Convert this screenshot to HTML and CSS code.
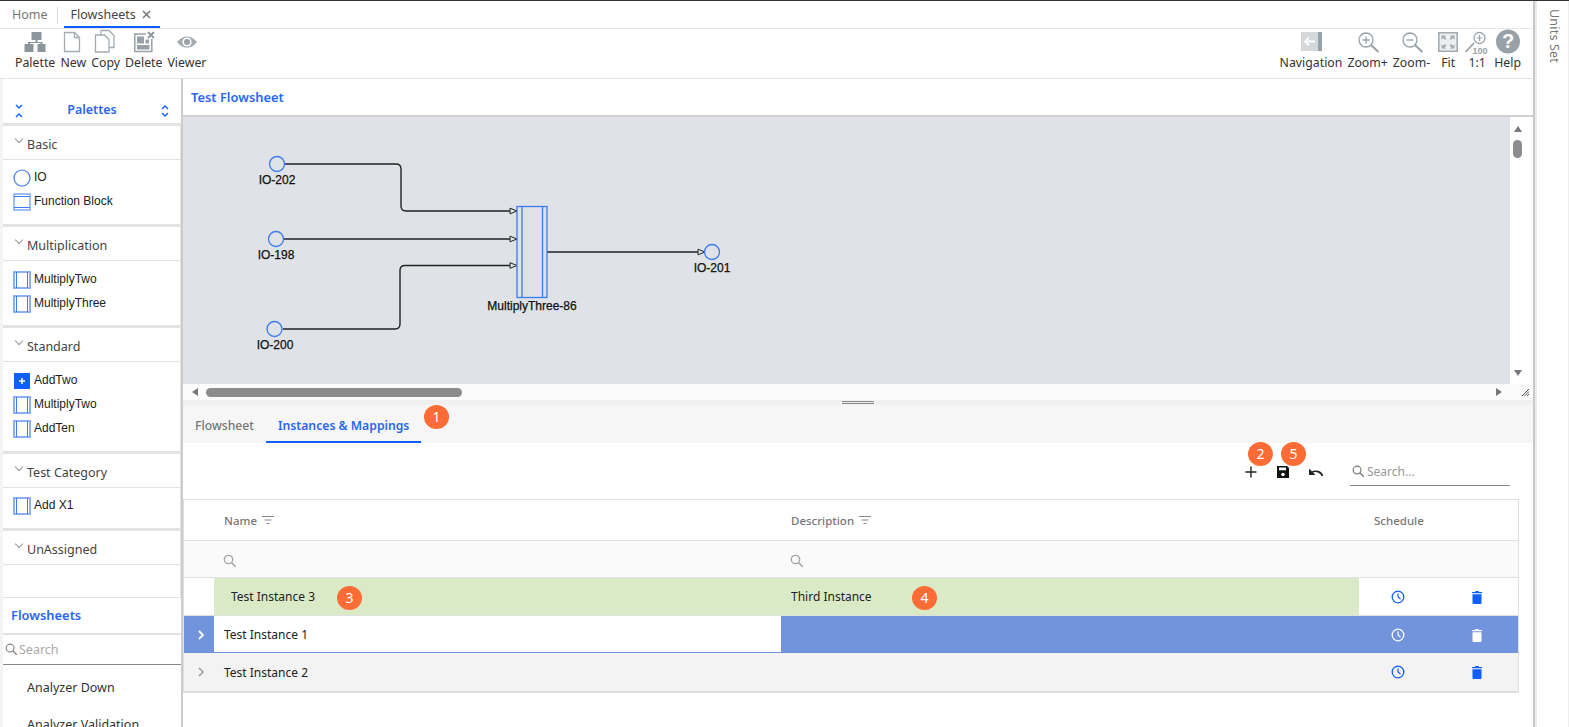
FILE: index.html
```html
<!DOCTYPE html>
<html lang="en">
<head>
  <meta charset="UTF-8" />
  <title>Flowsheets</title>
  <link rel="stylesheet" href="styles.css">
</head>
<body>
<div class="app">
  <div class="workspace">
    <nav class="tabs">
      <span class="tab">Home</span>
      <span class="tab-sep"></span>
      <span class="tab tab-active">Flowsheets <svg class="tab-x" viewBox="0 0 9 9"><path stroke="#777" stroke-width="1.500" d="M1 1l7 7M8 1L1 8"/></svg></span>
    </nav>

    <div class="toolbar">
      <div class="tool-group">
        <div class="tool">
          <svg class="tool-icon" viewBox="0 0 26 26"><path fill="#8b959c" d="M9.500 3h10v8h-4v2h5v2h3v8h-8v-8h3v-1H8v1h3.500v8h-9v-8H6v-2h7.500v-2h-4z"/></svg>
          <span>Palette</span>
        </div>
        <div class="tool">
          <svg class="tool-icon" viewBox="0 0 26 26"><path fill="none" stroke="#a4acb1" stroke-width="1.300" d="M4.500 3.500h10l5 5v14h-15zM14.500 3.500v5h5"/></svg>
          <span>New</span>
        </div>
        <div class="tool">
          <svg class="tool-icon" viewBox="0 0 26 26"><path fill="#fff" stroke="#a4acb1" stroke-width="1.300" d="M8 1.500h8l5 5v12H8z"/><path fill="#fff" stroke="#a4acb1" stroke-width="1.300" d="M2.500 6h9l4.500 4.500V23H2.500z"/></svg>
          <span>Copy</span>
        </div>
        <div class="tool">
          <svg class="tool-icon" viewBox="0 0 26 26"><path fill="none" stroke="#98a1a7" stroke-width="1.500" d="M3.800 5h17v17.500h-17z"/><path fill="#98a1a7" d="M6 7.500h7v7H6zM14.500 10.500H18v4h-3.500zM6 16h12.500v4.500H6z"/><path fill="#fff" d="M15 2h9v8h-9z"/><path stroke="#8b959c" stroke-width="1.800" d="M17 3l6 6M23 3l-6 6"/></svg>
          <span>Delete</span>
        </div>
        <div class="tool">
          <svg class="tool-icon" viewBox="0 0 26 26"><path fill="#a4acb1" d="M3 13c5.500-7.500 14.500-7.500 20 0-5.500 7.500-14.500 7.500-20 0z"/><circle cx="13" cy="13" r="4.600" fill="#fff"/><circle cx="13" cy="13" r="3" fill="#98a1a7"/></svg>
          <span>Viewer</span>
        </div>
      </div>
      <div class="tool-group">
        <div class="tool">
          <svg class="tool-icon" viewBox="0 0 26 26"><path fill="#d4d8da" d="M3 3h17v19H3z"/><path fill="#98a1a7" d="M20 3h4v19h-4z"/><path stroke="#fff" stroke-width="1.800" fill="none" d="M17 12.500H7M11 8.500l-4 4 4 4"/></svg>
          <span>Navigation</span>
        </div>
        <div class="tool">
          <svg class="tool-icon" viewBox="0 0 26 26"><circle cx="11" cy="11" r="7" fill="none" stroke="#98a1a7" stroke-width="1.300"/><path stroke="#98a1a7" stroke-width="1.300" d="M7.500 11h7M11 7.500v7"/><path stroke="#98a1a7" stroke-width="2" d="M16 16l7.500 7"/></svg>
          <span>Zoom+</span>
        </div>
        <div class="tool">
          <svg class="tool-icon" viewBox="0 0 26 26"><circle cx="11" cy="11" r="7" fill="none" stroke="#98a1a7" stroke-width="1.300"/><path stroke="#98a1a7" stroke-width="1.300" d="M7.500 11h7"/><path stroke="#98a1a7" stroke-width="2" d="M16 16l7.500 7"/></svg>
          <span>Zoom-</span>
        </div>
        <div class="tool">
          <svg class="tool-icon" viewBox="0 0 26 26"><path fill="#eceeef" stroke="#a4acb1" stroke-width="1.600" d="M3.800 3.800h18.400v18.400H3.800z"/><path fill="#a4acb1" d="M6.500 6.500h4.500L9.700 7.800l1.800 1.800-1.400 1.400-1.800-1.800-1.800 1.300zM19.500 6.500H15l1.300 1.300-1.800 1.800 1.400 1.400 1.800-1.800 1.800 1.300zM6.500 19.500h4.500l-1.300-1.300 1.800-1.800-1.400-1.400-1.800 1.800-1.800-1.300zM19.500 19.500H15l1.300-1.300-1.800-1.800 1.400-1.400 1.800 1.800 1.800-1.300z"/></svg>
          <span>Fit</span>
        </div>
        <div class="tool tool-one">
          <svg class="tool-icon" viewBox="0 0 26 26"><circle cx="15.500" cy="9" r="5.500" fill="none" stroke="#98a1a7" stroke-width="1.300"/><path stroke="#98a1a7" stroke-width="1.200" d="M12.500 9h6M15.500 6v6"/><path stroke="#98a1a7" stroke-width="1.800" d="M10 14l-8.500 9"/><text x="8.500" y="25" class="tool-100">100</text></svg>
          <span>1:1</span>
        </div>
        <div class="tool tool-help">
          <svg class="tool-icon" viewBox="0 0 26 26"><circle cx="13" cy="12.500" r="12" fill="#98a1a7"/><text x="13" y="19" class="help-q">?</text></svg>
          <span>Help</span>
        </div>
      </div>
    </div>

    <div class="main">
      <aside class="sidebar">
        <div class="pal-top">
          <svg class="chev" viewBox="0 0 10 14"><path fill="none" stroke="#1a66ff" stroke-width="1.500" d="M2 1l3 3 3-3M2 13l3-3 3 3"/></svg>
          <span class="pal-title">Palettes</span>
          <svg class="chev" viewBox="0 0 10 14"><path fill="none" stroke="#1a66ff" stroke-width="1.500" d="M2 5l3-3 3 3M2 9l3 3 3-3"/></svg>
        </div>

        <section class="pal pal-basic">
          <h4 class="pal-head"><i class="caret"></i>Basic</h4>
          <div class="pal-body">
            <div class="pal-item"><svg class="shape" viewBox="0 0 18 18"><circle cx="9" cy="9" r="8" fill="#fff" stroke="#3d7bf0" stroke-width="1.200"/></svg>IO</div>
            <div class="pal-item"><svg class="shape" viewBox="0 0 18 18"><use href="#fb"/></svg>Function Block</div>
          </div>
        </section>

        <section class="pal pal-multi">
          <h4 class="pal-head"><i class="caret"></i>Multiplication</h4>
          <div class="pal-body">
            <div class="pal-item"><svg class="shape" viewBox="0 0 18 18"><use href="#mb"/></svg>MultiplyTwo</div>
            <div class="pal-item"><svg class="shape" viewBox="0 0 18 18"><use href="#mb"/></svg>MultiplyThree</div>
          </div>
        </section>

        <section class="pal pal-std">
          <h4 class="pal-head"><i class="caret"></i>Standard</h4>
          <div class="pal-body">
            <div class="pal-item"><svg class="shape" viewBox="0 0 18 18"><rect x="1" y="1" width="16" height="16" fill="#0f5fff"/><path stroke="#fff" stroke-width="1.500" d="M6 9h6M9 6v6"/></svg>AddTwo</div>
            <div class="pal-item"><svg class="shape" viewBox="0 0 18 18"><use href="#mb"/></svg>MultiplyTwo</div>
            <div class="pal-item"><svg class="shape" viewBox="0 0 18 18"><use href="#mb"/></svg>AddTen</div>
          </div>
        </section>

        <section class="pal pal-test">
          <h4 class="pal-head"><i class="caret"></i>Test Category</h4>
          <div class="pal-body">
            <div class="pal-item"><svg class="shape" viewBox="0 0 18 18"><use href="#mb"/></svg>Add X1</div>
          </div>
        </section>

        <section class="pal pal-un">
          <h4 class="pal-head"><i class="caret"></i>UnAssigned</h4>
          <div class="pal-body"></div>
        </section>

        <div class="fs-title">Flowsheets</div>
        <div class="fs-search">
          <svg class="mag" viewBox="0 0 14 14"><circle cx="5.500" cy="5.500" r="4.200" fill="none" stroke="#8a8a8a" stroke-width="1.300"/><path stroke="#8a8a8a" stroke-width="1.600" d="M8.700 8.700l4 4"/></svg>
          <span>Search</span>
        </div>
        <ul class="fs-list">
          <li>Analyzer Down</li>
          <li>Analyzer Validation</li>
        </ul>
      </aside>

      <div class="content">
        <div class="sheet-title">Test Flowsheet</div>

        <div class="canvas-wrap">
          <div class="canvas-row">
            <svg class="canvas" viewBox="-1 0 1327 267">
              <defs>
                <g id="arrow"><path d="M0-2.800L7 0 0 2.800z" fill="#dfe2e6" stroke="#222" stroke-width="1"/></g>
              </defs>
              <g fill="none" stroke="#222" stroke-width="1.400">
                <path d="M101 47H212q5 0 5 5v37q0 5 5 5H327"/>
                <path d="M100 122H327"/>
                <path d="M99 212H211q5 0 5-5v-53.500q0-5 5-5H327"/>
                <path d="M363 135H514"/>
              </g>
              <use href="#arrow" x="326" y="94"/>
              <use href="#arrow" x="326" y="122"/>
              <use href="#arrow" x="326" y="148.500"/>
              <use href="#arrow" x="514" y="135"/>
              <g fill="#dfe2e6" stroke="#3d7bf0" stroke-width="1.300">
                <circle cx="93" cy="47" r="7.500"/>
                <circle cx="92" cy="122" r="7.500"/>
                <circle cx="90.500" cy="212" r="7.500"/>
                <circle cx="528" cy="135" r="7.500"/>
                <rect x="333" y="89.500" width="30" height="91"/>
                <path d="M338 89.500v91M358.500 89.500v91"/>
              </g>
              <g class="node-label">
                <text x="93" y="67">IO-202</text>
                <text x="92" y="142">IO-198</text>
                <text x="91" y="232">IO-200</text>
                <text x="528" y="155">IO-201</text>
                <text x="348" y="193">MultiplyThree-86</text>
              </g>
            </svg>
            <div class="vscroll">
              <i class="arr arr-up"></i>
              <i class="vthumb"></i>
              <i class="arr arr-down"></i>
            </div>
          </div>
          <div class="hscroll">
            <i class="arr arr-left"></i>
            <div class="htrack"><i class="hthumb"></i></div>
            <i class="arr arr-right"></i>
            <svg class="grip" viewBox="0 0 10 10"><path stroke="#555" d="M9 2L2 9M9 4.500L4.500 9M9 7L7 9"/></svg>
          </div>
        </div>

        <div class="divider"><i></i></div>

        <div class="subtabs">
          <span class="subtab">Flowsheet</span>
          <span class="subtab subtab-active">Instances &amp; Mappings</span>
          <span class="badge badge-1">1</span>
        </div>

        <div class="actions">
          <span class="badge badge-2">2</span>
          <span class="badge badge-5">5</span>
          <svg class="act" viewBox="0 0 14 14"><path stroke="#222" stroke-width="1.400" d="M1.500 7h11M7 1.500v11"/></svg>
          <svg class="act" viewBox="0 0 14 14"><path fill="#111" d="M1 1h10l2 2v10H1z"/><path fill="#fff" d="M3 2.500h7v2.800H3z"/><circle cx="7" cy="9.500" r="1.800" fill="#fff"/></svg>
          <svg class="act act-undo" viewBox="0 0 16 14"><path fill="none" stroke="#222" stroke-width="1.700" d="M14.500 11C13 6.500 8 5 3.500 7.500"/><path fill="#222" d="M1 3.500V10h6.500z"/></svg>
          <div class="act-search">
            <svg class="mag" viewBox="0 0 14 14"><circle cx="5.500" cy="5.500" r="4.200" fill="none" stroke="#777" stroke-width="1.300"/><path stroke="#777" stroke-width="1.600" d="M8.700 8.700l4 4"/></svg>
            <span>Search...</span>
          </div>
        </div>

        <div class="table">
          <div class="tr tr-head">
            <div class="td"></div>
            <div class="td td-name">Name <svg class="filter" viewBox="0 0 14 10"><path stroke="#888" d="M1 1.500h12M3.500 5h7M5.500 8.500h3"/></svg></div>
            <div class="td td-desc">Description <svg class="filter" viewBox="0 0 14 10"><path stroke="#888" d="M1 1.500h12M3.500 5h7M5.500 8.500h3"/></svg></div>
            <div class="td td-sched">Schedule</div>
            <div class="td"></div>
          </div>
          <div class="tr tr-filter">
            <div class="td"></div>
            <div class="td td-name"><svg class="mag" viewBox="0 0 14 14"><circle cx="5.500" cy="5.500" r="4.200" fill="none" stroke="#a3a3a3" stroke-width="1.300"/><path stroke="#a3a3a3" stroke-width="1.600" d="M8.700 8.700l4 4"/></svg></div>
            <div class="td td-desc"><svg class="mag" viewBox="0 0 14 14"><circle cx="5.500" cy="5.500" r="4.200" fill="none" stroke="#a3a3a3" stroke-width="1.300"/><path stroke="#a3a3a3" stroke-width="1.600" d="M8.700 8.700l4 4"/></svg></div>
            <div class="td"></div>
            <div class="td"></div>
          </div>
          <div class="tr tr-row tr-new">
            <div class="td"></div>
            <div class="td td-name td-green td-indent">Test Instance 3<span class="badge badge-3">3</span></div>
            <div class="td td-desc td-green">Third Instance<span class="badge badge-4">4</span></div>
            <div class="td td-icon"><svg class="ico" viewBox="0 0 14 14"><use href="#clock"/></svg></div>
            <div class="td td-icon"><svg class="ico" viewBox="0 0 14 14"><use href="#trash"/></svg></div>
          </div>
          <div class="tr tr-row tr-selected">
            <div class="td td-exp"><svg class="exp" viewBox="0 0 8 12"><path fill="none" stroke="#fff" stroke-width="1.800" d="M2 2l4 4-4 4"/></svg></div>
            <div class="td td-name td-white">Test Instance 1</div>
            <div class="td td-desc"></div>
            <div class="td td-icon"><svg class="ico" viewBox="0 0 14 14"><use href="#clock"/></svg></div>
            <div class="td td-icon"><svg class="ico" viewBox="0 0 14 14"><use href="#trash"/></svg></div>
          </div>
          <div class="tr tr-row tr-alt">
            <div class="td td-exp"><svg class="exp" viewBox="0 0 8 12"><path fill="none" stroke="#9a9a9a" stroke-width="1.500" d="M2 2l4 4-4 4"/></svg></div>
            <div class="td td-name">Test Instance 2</div>
            <div class="td td-desc"></div>
            <div class="td td-icon"><svg class="ico" viewBox="0 0 14 14"><use href="#clock"/></svg></div>
            <div class="td td-icon"><svg class="ico" viewBox="0 0 14 14"><use href="#trash"/></svg></div>
          </div>
        </div>
      </div>
    </div>
  </div>

  <div class="units"><span>Units Set</span></div>
</div>

<svg class="defs" width="0" height="0">
  <defs>
    <g id="fb">
      <rect x="1" y="1" width="16" height="16" fill="#fff" stroke="#7fa8f8" stroke-width="1.500"/>
      <path stroke="#3d7bf0" d="M1 3.500h16M1 14.500h16"/>
    </g>
    <g id="mb">
      <rect x="1" y="1" width="16" height="16" fill="#fff" stroke="#7fa8f8" stroke-width="1.800"/>
      <path stroke="#3d7bf0" d="M3.500 1v16M14.500 1v16"/>
    </g>
    <g id="clock" fill="none" stroke="currentColor">
      <circle cx="7" cy="7" r="5.800" stroke-width="1.300"/>
      <path stroke-width="1.200" d="M7 3.500V7l2.500 2"/>
    </g>
    <g id="trash" fill="currentColor">
      <path d="M2.500 4.200h9V13a1 1 0 0 1-1 1h-7a1 1 0 0 1-1-1z"/>
      <path d="M2 2h3l.5-1h3l.5 1h3v1.200H2z"/>
    </g>
  </defs>
</svg>
</body>
</html>
```

FILE: styles.css
```css
* { box-sizing: border-box; }
html, body { height: 100%; }
body {
  margin: 0;
  overflow: hidden;
  background: #fff;
  color: #222;
  font-family: "Noto Sans", "Open Sans", sans-serif;
  font-size: 12px;
}
i { display: block; font-style: normal; }
.defs { position: absolute; }

.app { display: flex; height: 727px; border-top: 1px solid #333; }
.workspace { width: 1535px; flex: none; height: 726px; display: flex; flex-direction: column; border-right: 2px solid #c8c8cc; }
.units { width: 34px; flex: none; border-left: 2px solid #ececec; border-right: 1px solid #eee; background: #fff; padding: 8px 0 0 9px; }
.units span { writing-mode: vertical-rl; color: #777; font-size: 12.500px; letter-spacing: .2px; }

/* tabs */
.tabs { height: 28px; flex: none; display: flex; align-items: stretch; padding-left: 3px; border-bottom: 1px solid #e8e8e8; }
.tab { padding: 5px 9px 0; color: #777; font-size: 12.500px; }
.tab-sep { width: 1px; height: 17px; margin: 6px 6px 0 0; background: #ddd; }
.tab-active { color: #444; border-bottom: 2px solid #0f5fff; padding: 5px 9px 0 7px; }
.tab-x { width: 9px; height: 9px; margin-left: 3px; }

.toolbar { height: 50px; flex: none; display: flex; justify-content: space-between; padding: 0 12px 0 15px; border-bottom: 1px solid #e3e3e3; }
.tool-group { display: flex; gap: 5px; }
.tool { display: flex; flex-direction: column; align-items: center; color: #333; font-size: 12.300px; line-height: 16px; }
.tool-icon { width: 26px; height: 26px; }
.tool-one { margin-left: -2px; }
.tool-help { margin-left: -1px; }
.tool-100 { font: bold 9px "Liberation Sans", sans-serif; fill: #98a1a7; }
.help-q { font: bold 20px "Liberation Sans", sans-serif; fill: #fff; text-anchor: middle; }

.main { flex: 1; display: flex; min-height: 0; }

/* left palettes */
.sidebar { width: 183px; flex: none; overflow: hidden; background: #e3e3e3; border-left: 3px solid #f4f4f4; border-right: 2px solid #ccc; }
.pal-top { height: 44px; background: #fff; display: flex; align-items: flex-end; justify-content: space-between; padding: 0 11px 5px 11px; }
.chev { width: 10px; height: 14px; }
.pal-title { color: #2a66f0; font-weight: 600; font-size: 12.500px; }
.pal { background: #fff; margin-top: 3px; border-right: 1px solid #e3e3e3; }
.pal-head { margin: 0; height: 34px; padding: 10px 0 0 24px; position: relative; font-weight: 400; font-size: 12.500px; color: #444; border-bottom: 1px solid #e3e3e3; line-height: 17px; }
.caret { position: absolute; left: 13px; top: 10px; width: 6px; height: 6px; border-right: 1px solid #999; border-bottom: 1px solid #999; transform: rotate(45deg); }
.pal-body { padding-top: 6px; }
.pal-item { height: 24px; display: flex; align-items: center; gap: 3px; padding-left: 10px; font: 12px "Liberation Sans", sans-serif; color: #222; }
.shape { width: 18px; height: 18px; margin-top: 2px; }
.pal-basic .pal-body { height: 64px; padding-top: 5px; }
.pal-multi .pal-body { height: 64px; }
.pal-std .pal-body { height: 89px; }
.pal-test .pal-body { height: 40px; padding-top: 5px; }
.pal-un .pal-body { height: 32px; }

.fs-title { height: 35px; margin-top: 1px; background: #fff; color: #2a66f0; font-weight: 600; padding: 8px 0 0 8px; font-size: 12.900px; }
.fs-search { height: 30px; margin-top: 2px; background: #fff; display: flex; align-items: center; gap: 1px; padding-left: 2px; color: #aaa; font-size: 12.500px; border-bottom: 1px solid #888; }
.mag { width: 13px; height: 13px; }
.fs-list { margin: 0; padding: 0 0 0 24px; list-style: none; background: #fff; height: 70px; font-size: 12.500px; color: #333; }
.fs-list li { height: 37px; padding-top: 14px; line-height: 18px; }

/* right content */
.content { flex: 1; min-width: 0; display: flex; flex-direction: column; }
.sheet-title { height: 38px; flex: none; padding: 9px 0 0 8px; color: #2a66f0; font-weight: 600; font-size: 12.900px; border-bottom: 2px solid #d0d0d0; }
.canvas-wrap { flex: none; height: 283px; }
.canvas-row { display: flex; height: 267px; }
.canvas { width: 1327px; height: 267px; display: block; background: #dfe2e6; }
.node-label text { font: 12px "Liberation Sans", sans-serif; fill: #111; text-anchor: middle; stroke: #111; stroke-width: .25px; }
.vscroll { flex: 1; background: #fff; display: flex; flex-direction: column; align-items: center; padding: 9px 8px 8px 0; }
.vthumb { width: 9px; height: 18px; background: #8c8c8c; border-radius: 5px; margin-top: 8px; }
.arr { width: 0; height: 0; border: 4px solid transparent; }
.arr-up { border-bottom: 6px solid #777; border-top: 0; }
.arr-down { border-top: 6px solid #777; border-bottom: 0; margin-top: auto; }
.hscroll { height: 16px; display: flex; align-items: center; padding-left: 9px; background: #fbfbfb; }
.arr-left { border-right: 6px solid #777; border-left: 0; }
.arr-right { border-left: 6px solid #777; border-right: 0; }
.htrack { width: 1282px; margin: 0 8px; }
.hthumb { width: 256px; height: 9px; background: #8c8c8c; border-radius: 5px; }
.grip { width: 10px; height: 10px; margin-left: 18px; }
.divider { height: 5px; flex: none; background: #f0f0f0; display: flex; justify-content: center; align-items: center; }
.divider i { width: 32px; height: 3px; border-top: 1px solid #888; border-bottom: 1px solid #888; }

/* sub tabs */
.subtabs { position: relative; height: 38px; flex: none; display: flex; align-items: stretch; background: #f6f6f6; font-size: 12.200px; }
.subtab { color: #777; padding: 12px 12px 0; font-weight: 500; }
.subtab-active { color: #2a66f0; border-bottom: 2px solid #0f5fff; font-weight: 600; }

.badge { position: absolute; width: 25px; height: 24px; border-radius: 50%; background: #fd6c35; color: #fff; font-size: 14px; line-height: 24px; text-align: center; z-index: 2; }
.badge-1 { left: 241px; top: 0; }
.badge-2 { left: 1065px; top: -1px; }
.badge-5 { left: 1098px; top: -1px; }
.badge-3 { left: 123px; top: 8px; }
.badge-4 { left: 131px; top: 8px; }

.actions { position: relative; height: 56px; flex: none; display: flex; align-items: flex-end; justify-content: flex-end; padding: 0 23px 14px 0; gap: 18px; }
.act { width: 14px; height: 14px; margin-bottom: 6px; }
.act-undo { width: 16px; }
.act-search { width: 160px; height: 28px; margin-left: 8px; margin-bottom: -1px; display: flex; align-items: center; gap: 2px; padding-left: 2px; color: #999; font-size: 12px; border-bottom: 1px solid #888; }

/* table */
.table { width: 1336px; border: 1px solid #e0e0e0; border-bottom: 2px solid #e0e0e0; flex: none; font-size: 12px; }
.tr { display: grid; grid-template-columns: 30px 567px 578px 77px 1fr; }
.td { position: relative; display: flex; align-items: center; }
.tr-head { height: 41px; border-bottom: 1px solid #e0e0e0; color: #777; font-weight: 500; font-size: 11.500px; }
.tr-head .td-name, .tr-head .td-desc { gap: 3px; }
.filter { width: 14px; height: 10px; margin-left: 1px; }
.td-name { padding-left: 10px; }
.td-desc { padding-left: 10px; }
.td-sched { padding-left: 15px; }
.tr-filter { height: 37px; background: #fafafa; border-bottom: 1px solid #e0e0e0; }
.tr-filter .mag { width: 14px; height: 14px; margin: 3px 0 0 -1px; }
.tr-row { height: 38px; color: #222; }
.tr-new { border-bottom: 1px solid #e0e0e0; }
.td-green { background: #dbeac6; }
.td-indent { padding-left: 17px; }
.tr-selected { background: #7294dc; height: 37px; }
.td-white { background: #fff; border-bottom: 1px solid #7294dc; }
.tr-alt { background: #f3f3f3; }
.td-exp { justify-content: center; padding-left: 3px; }
.exp { width: 8px; height: 12px; }
.td-icon { justify-content: center; color: #0f5fff; }
.tr-selected .td-icon { color: #fff; }
.ico { width: 14px; height: 14px; }
```
